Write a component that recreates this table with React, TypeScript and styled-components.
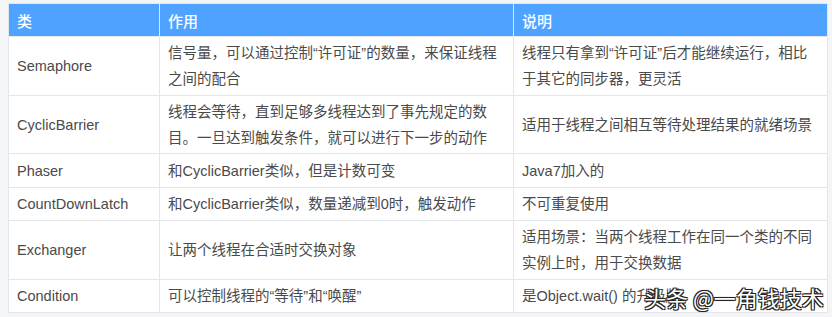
import React from "react";
import styled, { createGlobalStyle } from "styled-components";

const GlobalStyle = createGlobalStyle`
  html, body {
    margin: 0;
    padding: 0;
    background: #f4f5f7;
  }
`;

const Page = styled.div`
  position: relative;
  width: 832px;
  height: 317px;
  padding: 3px 5px 0 8px;
  box-sizing: border-box;
  font-family: "Liberation Sans", "Noto Sans CJK SC", sans-serif;
  overflow: hidden;
`;

const Table = styled.table`
  width: 819px;
  border-collapse: collapse;
  table-layout: fixed;
  background: #ffffff;
`;

const HeadCell = styled.th<{ $w: number }>`
  width: ${({ $w }) => $w}px;
  height: 33px;
  box-sizing: border-box;
  padding: 0 8px;
  background: #4da3ff;
  color: #ffffff;
  font-size: 15px;
  font-weight: 500;
  text-align: left;
  border: 1px solid #e3e6ea;
`;

const Cell = styled.td<{ $h: number }>`
  height: ${({ $h }) => $h}px;
  box-sizing: border-box;
  padding: 2px 8px;
  color: #4a4a4a;
  font-size: 14.5px;
  line-height: 26px;
  vertical-align: middle;
  border: 1px solid #e3e6ea;
`;

const Watermark = styled.div`
  position: absolute;
  left: 644px;
  top: 281px;
  font-family: "Noto Sans CJK SC", sans-serif;
  font-size: 22px;
  color: #ffffff;
  white-space: nowrap;
  text-shadow: -1px -1px 0 #222, 1px -1px 0 #222, -1px 1px 0 #222,
    1px 1px 0 #222, 0 0 2px #000;
`;

const rows: { name: string; use: string; note: string; h: number }[] = [
  {
    name: "Semaphore",
    use: "信号量，可以通过控制“许可证”的数量，来保证线程之间的配合",
    note: "线程只有拿到“许可证”后才能继续运行，相比于其它的同步器，更灵活",
    h: 59,
  },
  {
    name: "CyclicBarrier",
    use: "线程会等待，直到足够多线程达到了事先规定的数目。一旦达到触发条件，就可以进行下一步的动作",
    note: "适用于线程之间相互等待处理结果的就绪场景",
    h: 58,
  },
  { name: "Phaser", use: "和CyclicBarrier类似，但是计数可变", note: "Java7加入的", h: 34 },
  {
    name: "CountDownLatch",
    use: "和CyclicBarrier类似，数量递减到0时，触发动作",
    note: "不可重复使用",
    h: 33,
  },
  {
    name: "Exchanger",
    use: "让两个线程在合适时交换对象",
    note: "适用场景：当两个线程工作在同一个类的不同实例上时，用于交换数据",
    h: 59,
  },
  {
    name: "Condition",
    use: "可以控制线程的“等待”和“唤醒”",
    note: "是Object.wait() 的升级版",
    h: 33,
  },
];

const App = () => {
  return (
    <Page>
      <GlobalStyle />
      <Table>
        <thead>
          <tr>
            <HeadCell $w={151}>类</HeadCell>
            <HeadCell $w={354}>作用</HeadCell>
            <HeadCell $w={314}>说明</HeadCell>
          </tr>
        </thead>
        <tbody>
          {rows.map((r) => (
            <tr key={r.name}>
              <Cell $h={r.h}>{r.name}</Cell>
              <Cell $h={r.h}>{r.use}</Cell>
              <Cell $h={r.h}>{r.note}</Cell>
            </tr>
          ))}
        </tbody>
      </Table>
      <Watermark>头条 @一角钱技术</Watermark>
    </Page>
  );
};

export default App;
